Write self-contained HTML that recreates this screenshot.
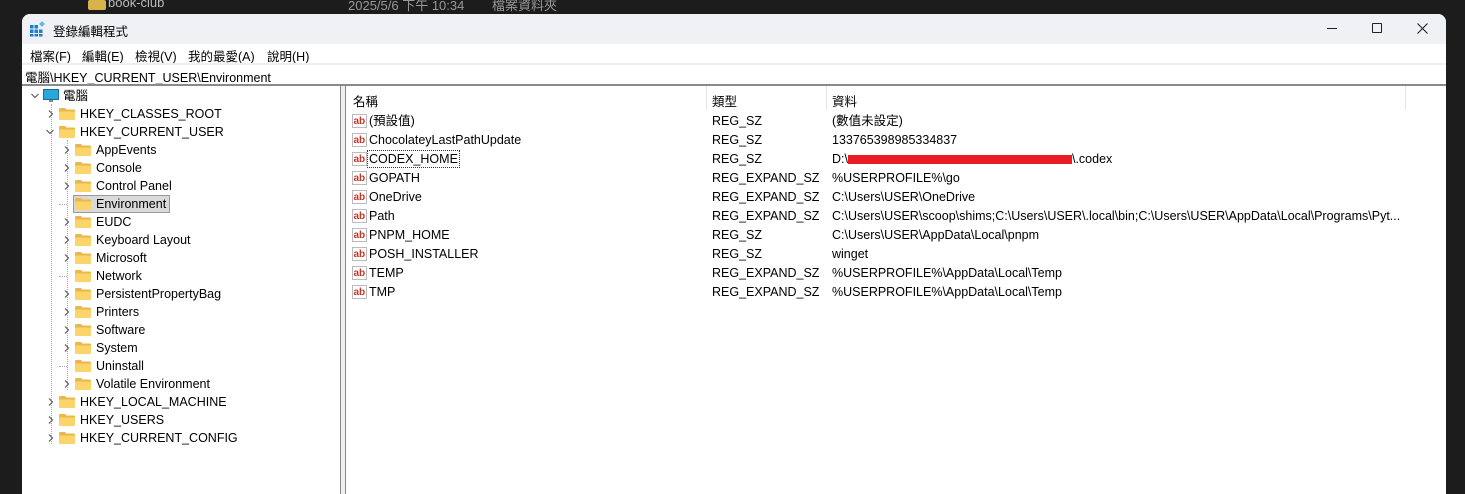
<!DOCTYPE html>
<html><head><meta charset="utf-8">
<style>
*{margin:0;padding:0;box-sizing:border-box}
body{width:1465px;height:485px;background:#1c1c1c;position:relative;overflow:hidden;font-family:"Liberation Sans","Noto Sans CJK TC",sans-serif;font-size:12.5px;color:#000}
.a{position:absolute;white-space:nowrap}
#win{position:absolute;left:22px;top:14px;width:1424px;height:480px;background:#fff;border-radius:8px 8px 0 0;overflow:hidden}
.t{position:absolute;white-space:nowrap;line-height:18px}
.fold{position:absolute;width:16px;height:12px}
.chev{position:absolute;width:8px;height:8px}
.ab{position:absolute;width:15px;height:14px}
</style></head><body>
<div class="a" style="left:88px;top:0;width:18px;height:10px;background:#d8b24a;border-radius:2px"></div>
<div class="a" style="left:108px;top:-5px;color:#bbb;font-size:13px">book-club</div>
<div class="a" style="left:348px;top:-5px;color:#999;font-size:13px">2025/5/6 下午 10:34</div>
<div class="a" style="left:492px;top:-5px;color:#999;font-size:13px">檔案資料夾</div>
<div id="win">
<div class="a" style="left:0;top:0;width:1424px;height:30px;background:#eff1f5"></div>
<svg class="a" style="left:7px;top:7px" width="16" height="16" viewBox="0 0 16 16"><g fill="#1b7fd0"><rect x="1" y="4" width="3.5" height="3.5"/><rect x="5.5" y="4" width="3.5" height="3.5"/><rect x="1" y="8.5" width="3.5" height="3.5"/><rect x="5.5" y="8.5" width="3.5" height="3.5"/><rect x="10" y="8.5" width="3.5" height="3.5"/><rect x="1" y="13" width="3.5" height="2.5"/><rect x="5.5" y="13" width="3.5" height="2.5"/><rect x="10" y="13" width="3.5" height="2.5"/></g><rect x="11" y="1" width="4" height="4" fill="#5cb8f0" transform="rotate(45 13 3)"/></svg>
<div class="a" style="left:31px;top:7px;font-size:12.5px">登錄編輯程式</div>
<div class="a" style="left:1305px;top:14px;width:10px;height:1px;background:#222"></div>
<div class="a" style="left:1350px;top:9px;width:10px;height:10px;border:1px solid #222;border-radius:1px"></div>
<svg class="a" style="left:1395px;top:9px" width="11" height="11"><path d="M0.5 0.5L10.5 10.5M10.5 0.5L0.5 10.5" stroke="#222" stroke-width="1.1"/></svg>
<div class="a" style="left:8px;top:32px">檔案(F)</div>
<div class="a" style="left:60px;top:32px">編輯(E)</div>
<div class="a" style="left:113px;top:32px">檢視(V)</div>
<div class="a" style="left:166px;top:32px">我的最愛(A)</div>
<div class="a" style="left:245px;top:32px">說明(H)</div>
<div class="a" style="left:0;top:49px;width:1424px;height:2px;background:#eeeeee"></div>
<div class="a" style="left:3px;top:53px">電腦\HKEY_CURRENT_USER\Environment</div>
<div class="a" style="left:0;top:70px;width:1424px;height:2px;background:#8a8a8a"></div>
<div class="a" style="left:318px;top:72px;width:6px;height:420px;background:#f0f0f0;border-left:1px solid #888;border-right:1px solid #888"></div>
<div class="a" style="left:684px;top:72px;width:1px;height:24px;background:#e5e5e5"></div>
<div class="a" style="left:804px;top:72px;width:1px;height:24px;background:#e5e5e5"></div>
<div class="a" style="left:1383px;top:72px;width:1px;height:24px;background:#e5e5e5"></div>
<div class="a" style="left:331px;top:77px">名稱</div>
<div class="a" style="left:690px;top:77px">類型</div>
<div class="a" style="left:810px;top:77px">資料</div>
</div>
<script>
var W=document.getElementById('win');
function add(h){W.insertAdjacentHTML('beforeend',h)}
function chev(x,y,open){return '<svg class="chev" style="left:'+x+'px;top:'+(y-4)+'px" width="8" height="8"><path d="'+(open?'M0.5 2L4 5.5L7.5 2':'M2 0.5L5.5 4L2 7.5')+'" fill="none" stroke="#555" stroke-width="1.1"/></svg>'}
function fold(x,y){return '<svg class="fold" style="left:'+x+'px;top:'+(y-6)+'px" width="16" height="12"><path d="M0 1.5Q0 0 1.5 0H6L7.5 1.5H14.5Q16 1.5 16 3V10.5Q16 12 14.5 12H1.5Q0 12 0 10.5Z" fill="#e9b84a"/><rect x="0" y="3.5" width="16" height="8.5" rx="1.2" fill="#fbd56a"/></svg>'}
var y0=96-14;
add(chev(9,y0,true));
add('<svg class="a" style="left:21px;top:'+(y0-7)+'px" width="16" height="15"><rect x="0.5" y="0.5" width="15" height="10" fill="#2aa6d8" stroke="#1a6f9a"/><rect x="6" y="11" width="4" height="2" fill="#888"/></svg>');
add('<div class="t" style="left:41px;top:'+(y0-9)+'px">電腦</div>');
var items=[[1,'HKEY_CLASSES_ROOT','c'],[1,'HKEY_CURRENT_USER','o'],[2,'AppEvents','c'],[2,'Console','c'],[2,'Control Panel','c'],[2,'Environment','s'],[2,'EUDC','c'],[2,'Keyboard Layout','c'],[2,'Microsoft','c'],[2,'Network','n'],[2,'PersistentPropertyBag','c'],[2,'Printers','c'],[2,'Software','c'],[2,'System','c'],[2,'Uninstall','n'],[2,'Volatile Environment','c'],[1,'HKEY_LOCAL_MACHINE','c'],[1,'HKEY_USERS','c'],[1,'HKEY_CURRENT_CONFIG','c']];
add('<div class="a" style="left:29px;top:'+(y0+8)+'px;height:340px;border-left:1px dotted #aaa"></div>');
add('<div class="a" style="left:45px;top:'+(y0+44)+'px;height:250px;border-left:1px dotted #aaa"></div>');
items.forEach(function(it,i){
 var y=y0+18*(i+1);var L=it[0];
 var cx=L==1?25:41, fx=L==1?37:53, tx=L==1?58:74;
 if(it[2]=='c')add(chev(cx,y,false));
 if(it[2]=='o')add(chev(cx-1,y,true));
 if(it[2]=='n'||it[2]=='s')add('<div class="a" style="left:'+(cx-4)+'px;top:'+y+'px;width:8px;border-top:1px dotted #aaa"></div>');
 if(it[2]=='s')add('<div class="a" style="left:'+(fx-2)+'px;top:'+(y-9)+'px;width:97px;height:18px;background:#d9d9d9;border:1px solid #9a9a9a"></div>');
 add(fold(fx,y));
 add('<div class="t" style="left:'+tx+'px;top:'+(y-9)+'px">'+it[1]+'</div>');
});
var rows=[['(預設值)','REG_SZ','(數值未設定)'],['ChocolateyLastPathUpdate','REG_SZ','133765398985334837'],['CODEX_HOME','REG_SZ','D:\\<span style="display:inline-block;width:224px;height:9px;background:#ea1c24;vertical-align:-1px"></span>\\.codex'],['GOPATH','REG_EXPAND_SZ','%USERPROFILE%\\go'],['OneDrive','REG_EXPAND_SZ','C:\\Users\\USER\\OneDrive'],['Path','REG_EXPAND_SZ','C:\\Users\\USER\\scoop\\shims;C:\\Users\\USER\\.local\\bin;C:\\Users\\USER\\AppData\\Local\\Programs\\Pyt...'],['PNPM_HOME','REG_SZ','C:\\Users\\USER\\AppData\\Local\\pnpm'],['POSH_INSTALLER','REG_SZ','winget'],['TEMP','REG_EXPAND_SZ','%USERPROFILE%\\AppData\\Local\\Temp'],['TMP','REG_EXPAND_SZ','%USERPROFILE%\\AppData\\Local\\Temp']];
rows.forEach(function(r,i){
 var y=121-14+19*i;
 add('<svg class="ab" style="left:330px;top:'+(y-7)+'px" width="15" height="14"><path d="M0.5 0.5H14.5V13.5H0.5Z" fill="#fff" stroke="#bbb"/><text x="1.5" y="10" font-family="Liberation Sans" font-size="10" font-weight="bold" fill="#c0392b">ab</text></svg>');
 add('<div class="t" style="left:347px;top:'+(y-9)+'px">'+r[0]+'</div>');
 if(i==2)add('<div class="a" style="left:345px;top:'+(y-9)+'px;width:93px;height:18px;border:1px dotted #333"></div>');
 add('<div class="t" style="left:690px;top:'+(y-9)+'px">'+r[1]+'</div>');
 add('<div class="t" style="left:810px;top:'+(y-9)+'px">'+r[2]+'</div>');
});
</script>
</body></html>
